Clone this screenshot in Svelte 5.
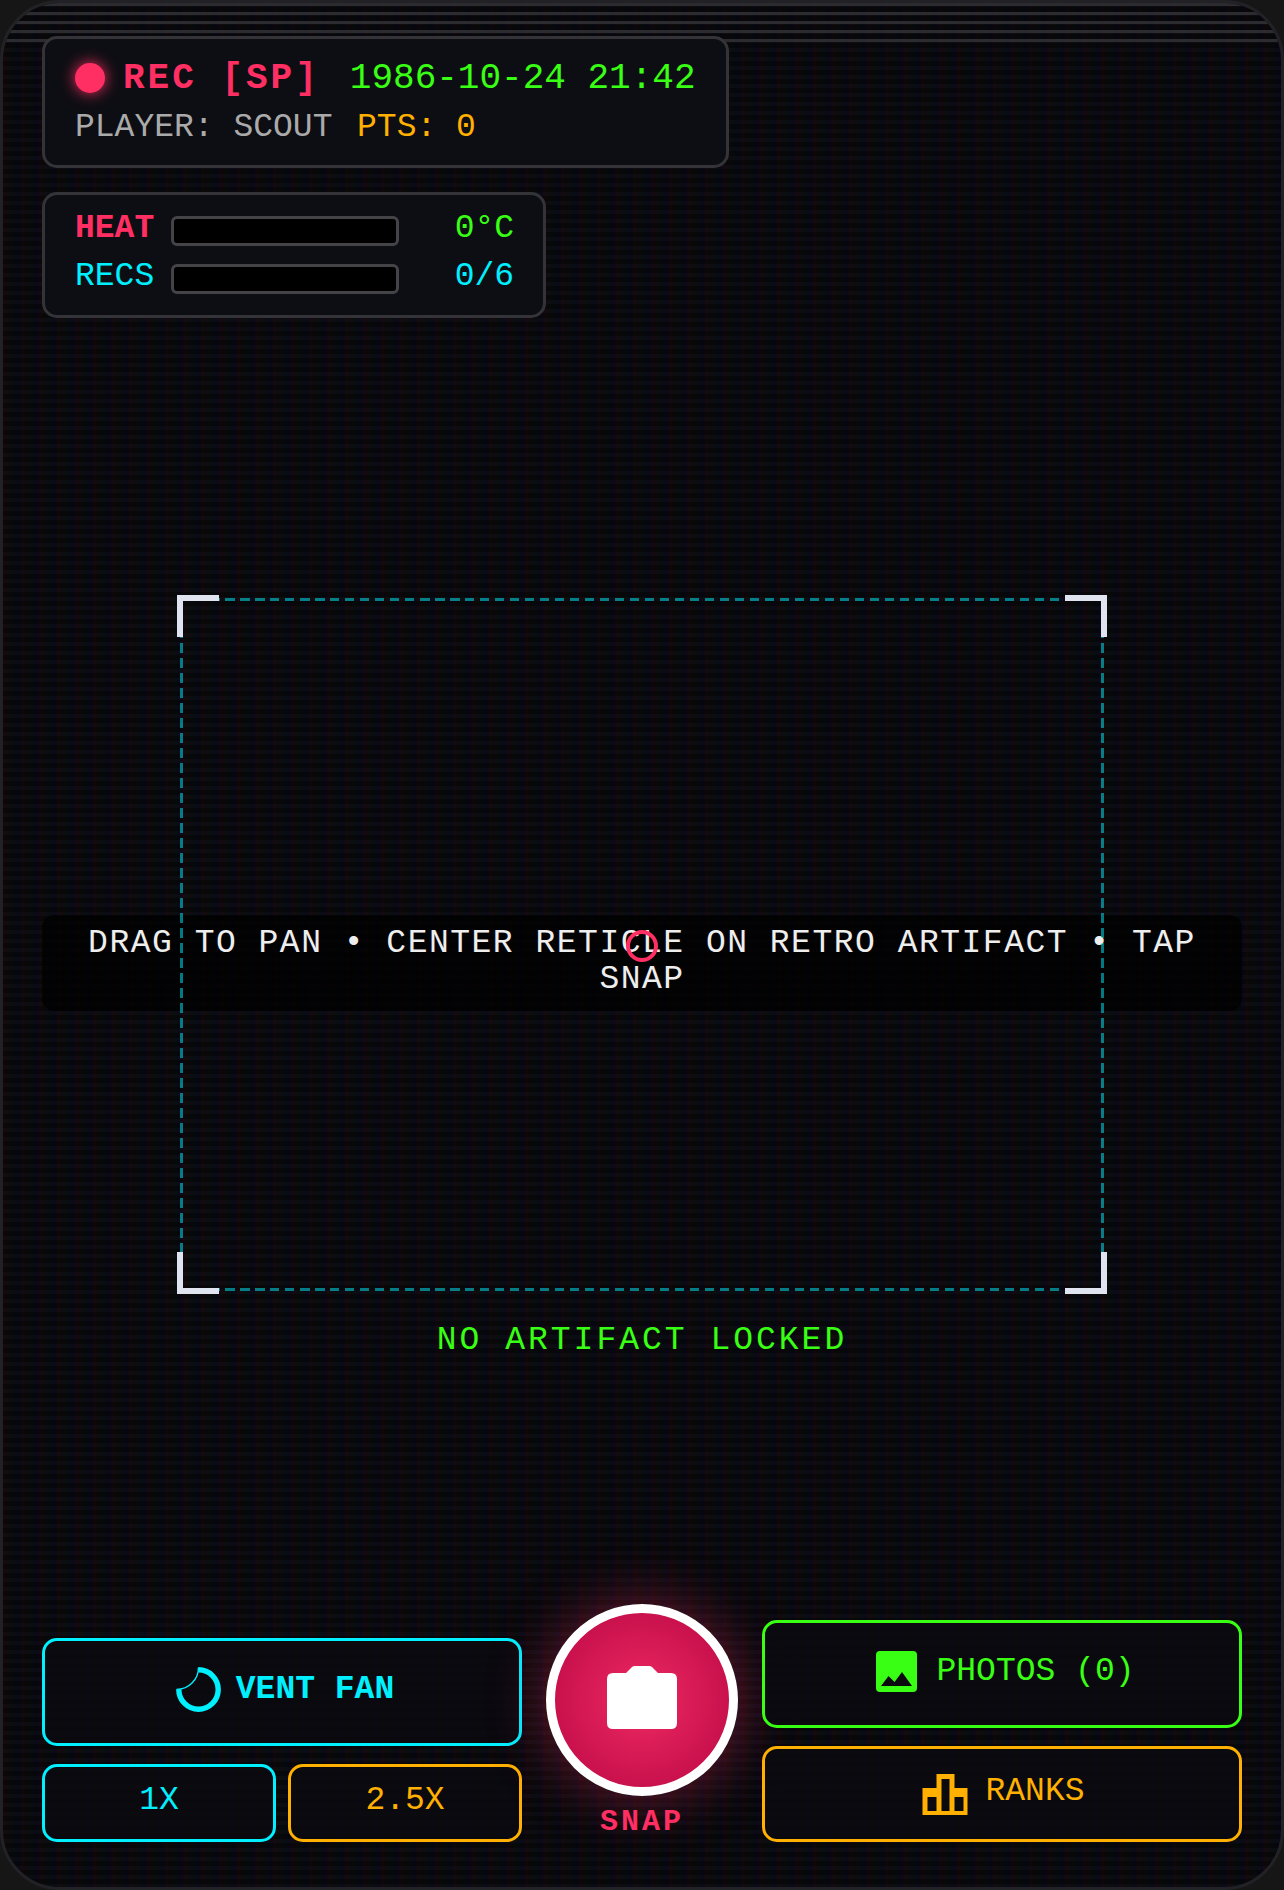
<script lang="ts">
	const pink = '#ff2e63';
	let heat = 0;
	let recs = 0;
	const help = 'DRAG TO PAN • CENTER RETICLE ON RETRO ARTIFACT • TAP SNAP';
</script>

<div class="screen">
	<div class="band"></div>

	<div class="hud">
		<div class="panel rec-panel">
			<div class="rec-row">
				<span class="dot"></span>
				<span class="rec">REC [SP]</span>
				<span class="date">1986-10-24 21:42</span>
			</div>
			<div class="player-row">
				<span class="player">PLAYER: SCOUT</span>
				<span class="pts">PTS: 0</span>
			</div>
		</div>

		<div class="panel meter-panel">
			<div class="meter">
				<span class="label heat">HEAT</span>
				<div class="bar"><div class="fill" style="width: {heat}%; background: {pink}"></div></div>
				<span class="value green">0°C</span>
			</div>
			<div class="meter">
				<span class="label cyan">RECS</span>
				<div class="bar"><div class="fill" style="width: {recs}%"></div></div>
				<span class="value cyan">0/6</span>
			</div>
		</div>
	</div>

	<div class="help">{help}</div>

	<div class="finder">
		<i class="corner tl"></i>
		<i class="corner tr"></i>
		<i class="corner bl"></i>
		<i class="corner br"></i>
		<div class="reticle"></div>
		<div class="lock">NO ARTIFACT LOCKED</div>
	</div>

	<div class="controls">
		<div class="col left-col">
			<button class="btn cyan-btn vent">
				<svg width="45" height="45" viewBox="0 0 45 45" fill="none" stroke="currentColor">
					<path d="M22.5 2.8A19.7 19.7 0 1 1 2.8 22.5" stroke-width="5.4" />
					<path d="M22.5 0.5A22 22 0 0 1 0.5 22.5" stroke-width="1.4" />
				</svg>
				<span>VENT FAN</span>
			</button>
			<div class="zooms">
				<button class="btn cyan-btn zoom">1X</button>
				<button class="btn amber-btn zoom">2.5X</button>
			</div>
		</div>

		<div class="snap-col">
			<button class="snap" aria-label="Snap">
				<svg width="70" height="63" viewBox="0 0 70 63" fill="#fff">
					<path d="M19 7 25 1Q26 0 28 0H42Q44 0 45 1L51 7H64Q70 7 70 13V57Q70 63 64 63H6Q0 63 0 57V13Q0 7 6 7Z" />
				</svg>
			</button>
			<span class="snap-label">SNAP</span>
		</div>

		<div class="col right-col">
			<button class="btn green-btn photos">
				<svg width="41" height="41" viewBox="0 0 41 41">
					<rect width="41" height="41" rx="4" fill="currentColor" />
					<path d="M5 35 12.5 25 18.5 31 26 21 36 35Z" fill="#0a0a0f" />
				</svg>
				<span>PHOTOS (0)</span>
			</button>
			<button class="btn amber-btn ranks">
				<svg width="46" height="41" viewBox="0 0 45 41">
					<path
						fill="currentColor"
						fill-rule="evenodd"
						d="M14 0H32V14H45V41H0V14H14ZM19 5V37H27V5ZM5 23V37H14V23ZM32 23V37H41V23Z"
					/>
				</svg>
				<span>RANKS</span>
			</button>
		</div>
	</div>
</div>

<style>
	:global(body) {
		background: #161616;
	}

	.screen {
		position: relative;
		box-sizing: border-box;
		width: 1284px;
		height: 1890px;
		display: flex;
		flex-direction: column;
		justify-content: space-between;
		padding: 33px 39px 45px;
		border: 3px solid #222226;
		border-radius: 60px;
		overflow: hidden;
		font-family: 'Liberation Mono', monospace;
		background-color: #0a0a0f;
		background-image:
			linear-gradient(rgba(0, 0, 0, 0) 50%, rgba(0, 0, 0, 0.38) 50%),
			linear-gradient(90deg, rgba(255, 0, 0, 0.05), rgba(0, 255, 0, 0.015), rgba(0, 0, 255, 0.05));
		background-size:
			100% 9px,
			18px 100%;
	}

	.band {
		position: absolute;
		top: 0;
		left: 0;
		right: 0;
		height: 39px;
		background: repeating-linear-gradient(180deg, #2c2c30 0 3px, transparent 3px 9px);
	}

	.hud {
		position: relative;
		display: flex;
		flex-direction: column;
		align-items: flex-start;
		gap: 24px;
	}

	.panel {
		box-sizing: border-box;
		border: 3px solid #343438;
		border-radius: 15px;
		background: #0d0e13;
	}

	.rec-panel {
		width: 687px;
		height: 132px;
		padding: 19px 30px;
	}

	.rec-row {
		display: flex;
		align-items: center;
		height: 41px;
		font-size: 36px;
	}

	.dot {
		width: 30px;
		height: 30px;
		margin: -1px 18px 0 0;
		border-radius: 50%;
		background: #ff2e63;
		box-shadow: 0 0 15px #ff2e63;
	}

	.rec {
		margin-right: 30px;
		color: #ff2e63;
		font-weight: 700;
		letter-spacing: 3px;
	}

	.date {
		color: #39ff14;
	}

	.player-row {
		display: flex;
		gap: 24.6px;
		margin-top: 9.5px;
		font-size: 33px;
	}

	.player {
		color: #aaaaaa;
	}

	.pts {
		color: #ffb000;
	}

	.meter-panel {
		display: flex;
		flex-direction: column;
		gap: 12px;
		width: 504px;
		height: 126px;
		padding: 15px 28px 14px 30px;
	}

	.meter {
		display: flex;
		align-items: flex-start;
		gap: 17px;
		height: 36px;
		font-size: 33px;
	}

	.label {
		width: 79.2px;
	}

	.heat {
		color: #ff2e63;
		font-weight: 700;
	}

	.bar {
		box-sizing: border-box;
		width: 228px;
		height: 30px;
		margin-top: 6px;
		border: 3px solid #444448;
		border-radius: 6px;
		background: #000;
		overflow: hidden;
	}

	.fill {
		height: 100%;
		background: #00f0ff;
	}

	.value {
		width: 98px;
		text-align: right;
	}

	.green {
		color: #39ff14;
	}

	.cyan {
		color: #00f0ff;
	}

	.help {
		position: absolute;
		top: 912px;
		left: 39px;
		right: 39px;
		box-sizing: border-box;
		height: 96px;
		padding: 11px 12px;
		border-radius: 12px;
		background: rgba(0, 0, 0, 0.7);
		color: #eeeeee;
		font-size: 33px;
		line-height: 36px;
		letter-spacing: 1.5px;
		text-align: center;
	}

	.finder {
		position: absolute;
		top: 595px;
		left: 177px;
		width: 924px;
		height: 693px;
		background:
			repeating-linear-gradient(90deg, rgba(0, 240, 255, 0.5) 0 9.5px, transparent 9.5px 15px) top / 100% 3px no-repeat,
			repeating-linear-gradient(90deg, rgba(0, 240, 255, 0.5) 0 9.5px, transparent 9.5px 15px) bottom / 100% 3px no-repeat,
			repeating-linear-gradient(180deg, rgba(0, 240, 255, 0.5) 0 9.5px, transparent 9.5px 15px) left / 3px 100% no-repeat,
			repeating-linear-gradient(180deg, rgba(0, 240, 255, 0.5) 0 9.5px, transparent 9.5px 15px) right / 3px 100% no-repeat;
	}

	.corner {
		position: absolute;
		width: 36px;
		height: 36px;
		border: 0 solid #e0e4f0;
	}

	.tl {
		top: -3px;
		left: -3px;
		border-width: 6px 0 0 6px;
	}

	.tr {
		top: -3px;
		right: -3px;
		border-width: 6px 6px 0 0;
	}

	.bl {
		bottom: -3px;
		left: -3px;
		border-width: 0 0 6px 6px;
	}

	.br {
		bottom: -3px;
		right: -3px;
		border-width: 0 6px 6px 0;
	}

	.reticle {
		position: absolute;
		top: 50%;
		left: 50%;
		box-sizing: border-box;
		width: 32px;
		height: 32px;
		margin: -15px 0 0 -16px;
		border: 4px solid #ff2e63;
		border-radius: 50%;
	}

	.lock {
		position: absolute;
		top: 100%;
		left: 0;
		right: 0;
		margin-top: 31px;
		color: #39ff14;
		font-size: 33px;
		letter-spacing: 3px;
		text-align: center;
	}

	.controls {
		position: relative;
		display: grid;
		grid-template-columns: 480px 192px 480px;
		gap: 24px;
		align-items: end;
	}

	.col {
		display: flex;
		flex-direction: column;
		gap: 18px;
	}

	.btn {
		box-sizing: border-box;
		display: flex;
		align-items: center;
		justify-content: center;
		border: 3px solid;
		border-radius: 15px;
		background: rgba(10, 10, 15, 0.9);
		font-family: inherit;
		font-size: 33px;
		padding: 0 0 5px;
		cursor: pointer;
	}

	.cyan-btn {
		border-color: #00f0ff;
		color: #00f0ff;
	}

	.amber-btn {
		border-color: #ffb000;
		color: #ffb000;
	}

	.green-btn {
		border-color: #39ff14;
		color: #39ff14;
	}

	.vent {
		height: 108px;
		gap: 15px;
		padding-left: 6px;
		font-weight: 700;
	}

	.zooms {
		display: flex;
		gap: 12px;
	}

	.zoom {
		flex: 1;
		height: 78px;
	}

	.photos {
		height: 108px;
		gap: 19px;
		padding-left: 7px;
	}

	.ranks {
		height: 96px;
		gap: 17px;
		padding-left: 3px;
	}

	.ranks svg {
		margin-top: 5px;
	}

	.snap-col {
		display: flex;
		flex-direction: column;
		align-items: center;
		padding-bottom: 3px;
	}

	.snap {
		box-sizing: border-box;
		display: flex;
		align-items: center;
		justify-content: center;
		width: 192px;
		height: 192px;
		padding: 0 0 6px;
		border: 9px solid #fff;
		border-radius: 50%;
		background: radial-gradient(circle closest-side, #ee2a62 0%, #c9114d 100%);
		box-shadow: 0 0 60px rgba(255, 46, 99, 0.4);
		cursor: pointer;
	}

	.snap-label {
		margin-top: 9px;
		color: #ff2e63;
		font-size: 30px;
		font-weight: 700;
		letter-spacing: 3px;
	}
</style>
